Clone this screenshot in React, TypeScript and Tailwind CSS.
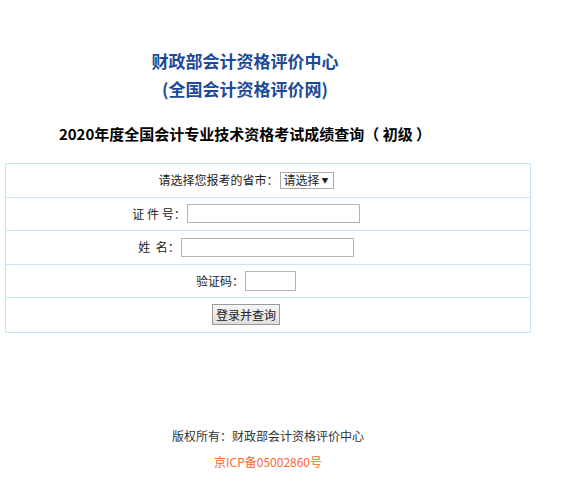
import React from "react";

const font = { fontFamily: '"Microsoft YaHei", "Noto Sans CJK SC", "Noto Sans", sans-serif' };

function Row({ children, last }: { children: React.ReactNode; last?: boolean }) {
  return (
    <div
      className={`flex h-[33.5px] items-center justify-center pr-[44px] ${
        last ? "" : "border-b border-[#c6e6f5]"
      }`}
    >
      {children}
    </div>
  );
}

export default function App() {
  return (
    <div className="min-h-[500px] bg-white text-[12px] text-[#222]" style={font}>
      <div className="pr-[79px] pt-[47px] text-center">
        <h1 className="text-[17px] font-bold leading-[28px] text-[#1c4a99]">财政部会计资格评价中心</h1>
        <h2 className="text-[17px] font-bold leading-[28px] text-[#1c4a99]">(全国会计资格评价网)</h2>
        <h3 className="mt-[20px] text-[15px] font-bold leading-[22px] text-black">
          2020年度全国会计专业技术资格考试成绩查询（ 初级 ）
        </h3>
      </div>

      <div className="ml-[5px] mt-[18px] w-[526px] border border-[#c6e6f5]">
        <Row>
          <span>请选择您报考的省市：</span>
          <div className="ml-[1px] flex h-[17px] w-[54px] items-center justify-between border border-[#a9a9a9] bg-white pl-[3px] pr-[4px] text-[12px]">
            <span>请选择</span>
            <span className="text-[7px]">▼</span>
          </div>
        </Row>
        <Row>
          <span className="whitespace-pre">证 件 号：</span>
          <input className="ml-[1px] h-[19px] w-[173px] border border-[#b5b5b5] outline-none" />
        </Row>
        <Row>
          <span className="whitespace-pre">姓  名：</span>
          <input className="ml-[1px] h-[19px] w-[173px] border border-[#b5b5b5] outline-none" />
        </Row>
        <Row>
          <span>验证码：</span>
          <input className="ml-[1px] h-[20px] w-[51px] border border-[#b5b5b5] outline-none" />
        </Row>
        <Row last>
          <button className="h-[21px] w-[68px] border border-[#9a9a9a] bg-gradient-to-b from-[#f6f6f6] to-[#dedede] text-[12px] text-[#222]">
            登录并查询
          </button>
        </Row>
      </div>

      <div className="mt-[90px] pr-[33px] text-center text-[12px] leading-[26px]">
        <p className="text-[#333]">版权所有：财政部会计资格评价中心</p>
        <p className="text-[#ff6633]">京ICP备05002860号</p>
      </div>
    </div>
  );
}
